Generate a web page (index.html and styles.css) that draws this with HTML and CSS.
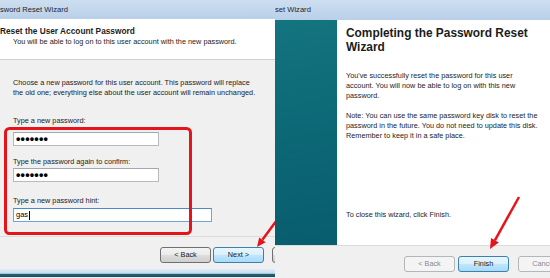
FILE: index.html
```html
<!DOCTYPE html>
<html>
<head>
<meta charset="utf-8">
<link rel="stylesheet" href="styles.css">
</head>
<body>
<div class="stage">
  <div class="win left">
    <div class="tb tb-left">sword Reset Wizard</div>
    <div class="hdr">
      <div class="hdr-title">Reset the User Account Password</div>
      <div class="hdr-sub">You will be able to log on to this user account with the new password.</div>
    </div>
    <div class="form">
      <p class="intro">Choose a new password for this user account. This password will replace<br>the old one; everything else about the user account will remain unchanged.</p>
      <div class="lbl l1">Type a new password:</div>
      <div class="field f1"><span class="dots">•••••••</span></div>
      <div class="lbl l2">Type the password again to confirm:</div>
      <div class="field f2"><span class="dots">•••••••</span></div>
      <div class="lbl l3">Type a new password hint:</div>
      <div class="field f3 focus"><span class="txt">gas</span><span class="caret"></span></div>
    </div>
    <div class="foot foot-left">
      <div class="btn">&lt; Back</div>
      <div class="btn def">Next &gt;</div>
      <div class="btn cancel-cut"></div>
    </div>
    <div class="taskstrip"></div>
    <svg class="annot" width="275" height="278" viewBox="0 0 275 278">
      <rect x="5.5" y="128.5" width="185" height="105" rx="4" ry="4" fill="none" stroke="#e5141b" stroke-width="3"/>
      <line x1="282" y1="213" x2="262.4" y2="239.8" stroke="#e5141b" stroke-width="2.5"/>
      <polygon points="257,247 265.6,242.2 259.2,237.4" fill="#e5141b"/>
    </svg>
  </div>
  <div class="win right">
    <div class="tb tb-right">set Wizard</div>
    <div class="main">
      <div class="side"></div>
      <div class="content">
        <div class="big">Completing the Password Reset Wizard</div>
        <p class="p1">You've successfully reset the password for this user<br>account. You will now be able to log on with this new<br>password.</p>
        <p class="p2">Note: You can use the same password key disk to reset the<br>password in the future. You do not need to update this disk.<br>Remember to keep it in a safe place.</p>
        <p class="close">To close this wizard, click Finish.</p>
      </div>
    </div>
    <div class="foot foot-right">
      <div class="btn dis">&lt; Back</div>
      <div class="btn def">Finish</div>
      <div class="btn dis cancel">Cancel</div>
    </div>
    <svg class="annot" width="275" height="278" viewBox="0 0 275 278">
      <line x1="244" y1="197" x2="219.9" y2="240.3" stroke="#e5141b" stroke-width="2.5"/>
      <polygon points="215,249 223.8,242.5 216,238.1" fill="#e5141b"/>
    </svg>
  </div>
</div>
</body>
</html>
```
FILE: styles.css
```css
html, body {
  margin: 0;
  padding: 0;
}
body {
  width: 550px;
  height: 278px;
  overflow: hidden;
  font-family: "Liberation Sans", Arial, sans-serif;
  color: #1c1c1c;
  background: #f0f0f0;
}
.stage {
  display: flex;
  width: 550px;
  height: 278px;
}
.win {
  position: relative;
  width: 275px;
  flex: 0 0 275px;
  height: 278px;
  display: flex;
  flex-direction: column;
  overflow: hidden;
  background: #f0f0f0;
}
.tb {
  flex: 0 0 19px;
  background: linear-gradient(#cddef0, #b9d0e9);
  font-size: 7.6px;
  line-height: 20px;
  white-space: nowrap;
  overflow: hidden;
  color: #1b2533;
}
.tb-left { padding-left: 0; }
.tb-right { flex-basis: 20px; padding-left: 0; }

/* left header */
.hdr {
  flex: 0 0 41px;
  box-sizing: border-box;
  background: #fff;
  border-bottom: 1px solid #cfcfcf;
  padding-top: 7px;
}
.hdr-title {
  font-weight: bold;
  font-size: 8.3px;
  line-height: 10px;
  white-space: nowrap;
}
.hdr-sub {
  font-size: 7.3px;
  line-height: 10px;
  margin: 1px 0 0 13px;
  white-space: nowrap;
}

/* left form */
.form {
  flex: 0 0 176px;
  box-sizing: border-box;
  padding: 18px 0 0 13px;
  font-size: 7.3px;
  line-height: 10px;
  white-space: nowrap;
}
.intro { margin: 0; }
.lbl { height: 10px; }
.l1 { margin-top: 18px; }
.l2 { margin-top: 11px; }
.l3 { margin-top: 14px; }
.field {
  box-sizing: border-box;
  height: 14px;
  width: 146px;
  background: #fff;
  border: 1px solid #b5b9c0;
  border-top-color: #a3a7ae;
  display: flex;
  align-items: center;
  padding-left: 2px;
}
.f1 { margin-top: 6px; }
.f2 { margin-top: 1px; }
.f3 { margin-top: 2px; width: 199px; }
.focus { border-color: #6fa6d6; border-top-color: #4b8ac4; }
.dots {
  font-size: 12.5px;
  line-height: 12px;
  letter-spacing: 0.2px;
  color: #000;
  font-weight: bold;
}
.txt { font-size: 7.5px; line-height: 12px; color: #000; }
.caret {
  width: 1px;
  height: 9px;
  background: #000;
  margin-left: 0.5px;
}

/* footers */
.foot {
  display: flex;
  box-sizing: border-box;
  border-top: 1px solid #dcdcdc;
}
.foot-left {
  flex: 0 0 33px;
  padding: 10px 0 0 160px;
  gap: 2px;
}
.foot-right {
  flex: 1 1 auto;
  padding: 10px 0 0 129px;
  gap: 3px;
}
.btn {
  box-sizing: border-box;
  flex: 0 0 51px;
  width: 51px;
  height: 16px;
  border: 1px solid #707070;
  border-radius: 3px;
  background: linear-gradient(#f3f3f3 0%, #ebebeb 48%, #dddddd 52%, #cfcfcf 100%);
  font-size: 7.3px;
  line-height: 14px;
  text-align: center;
  color: #1a1a1a;
  white-space: nowrap;
}
.btn.def {
  border-color: #3c7fb1;
  background: linear-gradient(#eaf6fd 0%, #d9f0fc 48%, #bee6fd 52%, #a9dbf6 100%);
}
.btn.dis {
  border-color: #b3b7ba;
  background: #f4f4f4;
  color: #8a8a8a;
}
.cancel-cut { margin-left: 6px; }
.cancel { margin-left: 6px; }

.taskstrip {
  flex: 0 0 8px;
  background: linear-gradient(#e3eef8 0%, #c3d9ee 55%, #2a6273 62%, #16505f 100%);
}

/* right */
.main {
  flex: 0 0 225px;
  display: flex;
}
.side {
  flex: 0 0 62px;
  background: linear-gradient(170deg, #147480 0%, #0d6a77 40%, #085c6e 100%);
}
.content {
  flex: 1 1 auto;
  background: #fff;
  padding: 6px 0 0 9px;
  box-sizing: border-box;
  display: flex;
  flex-direction: column;
  font-size: 7.3px;
  line-height: 10px;
}
.big {
  font-weight: bold;
  font-size: 11.9px;
  line-height: 14px;
  width: 200px;
}
.content p { margin: 0; white-space: nowrap; }
.p1 { margin-top: 17px !important; }
.p2 { margin-top: 10px !important; }
.close { margin-top: auto !important; margin-bottom: 25px !important; }

.annot {
  position: absolute;
  left: 0;
  top: 0;
  pointer-events: none;
}
```
